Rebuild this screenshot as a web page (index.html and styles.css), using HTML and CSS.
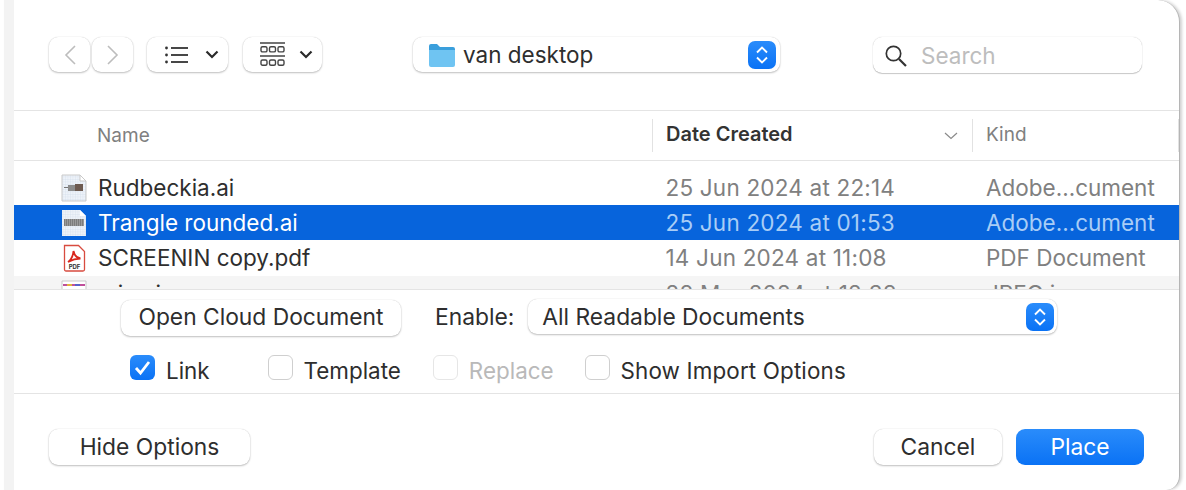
FILE: index.html
```html
<!DOCTYPE html>
<html lang="en">
<head>
    <meta charset="UTF-8">
    <title>Place</title>
    <link rel="stylesheet" href="styles.css">
</head>
<body>
    <div class="window">
        <div class="toolbar">
            <div class="btn nav-btn">
                <svg width="12" height="20" viewBox="0 0 12 20"><path d="M11 1 2 10l9 9" fill="none" stroke="#bdbdbd" stroke-width="1.6"/></svg>
            </div>
            <div class="btn nav-btn nav-next">
                <svg width="12" height="20" viewBox="0 0 12 20"><path d="M1 1l9 9-9 9" fill="none" stroke="#bdbdbd" stroke-width="1.6"/></svg>
            </div>
            <div class="btn view-btn">
                <svg width="24" height="18" viewBox="0 0 24 18"><g fill="#333"><circle cx="1.5" cy="2" r="1.4"/><circle cx="1.5" cy="9" r="1.4"/><circle cx="1.5" cy="16" r="1.4"/><rect x="6" y="1.100" width="17" height="1.800"/><rect x="6" y="8.100" width="17" height="1.800"/><rect x="6" y="15.100" width="17" height="1.800"/></g></svg>
                <svg class="chevron" width="14" height="9" viewBox="0 0 14 9"><path d="M1.500 1.500 7 7l5.500-5.500" fill="none" stroke="#2a2a2a" stroke-width="2.200"/></svg>
            </div>
            <div class="btn group-btn">
                <svg width="25" height="25" viewBox="0 0 25 25"><g fill="none" stroke="#444" stroke-width="1.400"><path d="M0 1h25M0 14h25" stroke-width="1.600"/><rect x="1" y="4.700" width="6" height="5.200" rx="1.500"/><rect x="9.500" y="4.700" width="6" height="5.200" rx="1.500"/><rect x="18" y="4.700" width="6" height="5.200" rx="1.500"/><rect x="1" y="18" width="6" height="5.200" rx="1.500"/><rect x="9.500" y="18" width="6" height="5.200" rx="1.500"/><rect x="18" y="18" width="6" height="5.200" rx="1.500"/></g></svg>
                <svg class="chevron" width="14" height="9" viewBox="0 0 14 9"><path d="M1.500 1.500 7 7l5.500-5.500" fill="none" stroke="#2a2a2a" stroke-width="2.200"/></svg>
            </div>
            <div class="btn path-select">
                <svg width="26" height="24" viewBox="0 0 26 24"><path d="M0 3a2 2 0 0 1 2-2h6l3 3h13a2 2 0 0 1 2 2v2H0z" fill="#3a9fdc"/><path d="M0 7h26v15a2 2 0 0 1-2 2H2a2 2 0 0 1-2-2z" fill="#6fc4f2"/></svg>
                <span class="path-name">van desktop</span>
                <span class="stepper">
                    <svg width="14" height="20" viewBox="0 0 14 20"><path d="M2 7.500 7 2.500l5 5M2 12.500l5 5 5-5" fill="none" stroke="#fff" stroke-width="1.900"/></svg>
                </span>
            </div>
            <div class="search">
                <svg width="24" height="24" viewBox="0 0 24 24"><circle cx="8.500" cy="10.500" r="7.200" fill="none" stroke="#333" stroke-width="1.700"/><path d="m14 16 7 7" stroke="#333" stroke-width="2.200"/></svg>
                <span class="search-text">Search</span>
            </div>
        </div>

        <div class="columns">
            <div class="col-name">Name</div>
            <div class="col-date">
                <b>Date Created</b>
                <svg width="14" height="8" viewBox="0 0 14 8"><path d="M1 1l6 5.500L13 1" fill="none" stroke="#8a8a8a" stroke-width="1.200"/></svg>
            </div>
            <div class="col-kind">Kind</div>
        </div>

        <div class="file-list">
            <div class="file-row">
                <div class="file-name">
                    <svg width="28" height="28" viewBox="0 0 28 28">
                        <defs>
                            <pattern id="artboard" width="2.500" height="2.500" patternUnits="userSpaceOnUse"><rect width="2.500" height="2.500" fill="#eef3f9"/><path d="M0 0h2.500M0 0v2.500" stroke="#cfdcea" stroke-width="0.600"/></pattern>
                            <pattern id="barcode" width="2" height="8" patternUnits="userSpaceOnUse"><rect width="2" height="8" fill="#9a9a9a"/><rect width="0.800" height="8" fill="#757575"/></pattern>
                        </defs>
                        <path d="M2 1h18l6 6v20H2z" fill="url(#artboard)" stroke="#c9c9c9"/><path d="M20 1v6h6z" fill="#fff" stroke="#c9c9c9"/><rect x="8" y="11" width="7" height="6" fill="#8c8c8c"/><rect x="15" y="10" width="8" height="7" fill="#6d5a50"/><rect x="4" y="13" width="4" height="1" fill="#777"/>
                    </svg>
                    Rudbeckia.ai
                </div>
                <div class="file-date">25 Jun 2024 at 22:14</div>
                <div class="file-kind">Adobe...cument</div>
            </div>
            <div class="file-row selected">
                <div class="file-name">
                    <svg width="28" height="28" viewBox="0 0 28 28"><path d="M2 1h18l6 6v20H2z" fill="url(#artboard)"/><path d="M20 1v6h6z" fill="#fff"/><rect x="4" y="10" width="20" height="7" fill="url(#barcode)"/></svg>
                    Trangle rounded.ai
                </div>
                <div class="file-date">25 Jun 2024 at 01:53</div>
                <div class="file-kind">Adobe...cument</div>
            </div>
            <div class="file-row">
                <div class="file-name">
                    <svg width="28" height="28" viewBox="0 0 28 28"><path d="M4.500 1.500h14l6 6v18a1.500 1.500 0 0 1-1.500 1.500H6a1.500 1.500 0 0 1-1.500-1.500z" fill="#fff" stroke="#d84b3f" stroke-width="1.300"/><path d="M8 18c3-2 5-6 5.500-11 1 5 3 7 7 7.500-4 0-8 1-12.500 3.500z" fill="none" stroke="#d8261c" stroke-width="1.800"/><text x="14.500" y="25" class="pdf-mark">PDF</text></svg>
                    SCREENIN copy.pdf
                </div>
                <div class="file-date">14 Jun 2024 at 11:08</div>
                <div class="file-kind">PDF Document</div>
            </div>
            <div class="file-row alt">
                <div class="file-name">
                    <svg width="28" height="28" viewBox="0 0 28 28"><path d="M2 1h24v26H2z" fill="#fff" stroke="#c9c9c9"/><rect x="3" y="4" width="22" height="2" fill="#c0509a"/><rect x="7" y="4" width="5" height="2" fill="#e2b33c"/><rect x="15" y="4" width="5" height="2" fill="#5a62c8"/></svg>
                    miami
                </div>
                <div class="file-date">28 Mar 2024 at 12:38</div>
                <div class="file-kind">JPEG image</div>
            </div>
        </div>

        <div class="options">
            <div class="options-top">
                <div class="btn cloud-btn">Open Cloud Document</div>
                <span class="enable-label">Enable:</span>
                <div class="btn enable-select">
                    <span>All Readable Documents</span>
                    <span class="stepper">
                        <svg width="14" height="20" viewBox="0 0 14 20"><path d="M2 7.500 7 2.500l5 5M2 12.500l5 5 5-5" fill="none" stroke="#fff" stroke-width="1.900"/></svg>
                    </span>
                </div>
            </div>
            <div class="options-checks">
                <label class="check check-link"><span class="box on"><svg width="19" height="17" viewBox="0 0 19 17"><path d="M3 9l4.500 5L16 3" fill="none" stroke="#fff" stroke-width="2.800"/></svg></span>Link</label>
                <label class="check check-template"><span class="box"></span>Template</label>
                <label class="check check-replace disabled"><span class="box"></span>Replace</label>
                <label class="check check-import"><span class="box"></span>Show Import Options</label>
            </div>
        </div>

        <div class="footer">
            <div class="btn hide-btn">Hide Options</div>
            <div class="footer-right">
                <div class="btn action-btn">Cancel</div>
                <div class="btn action-btn primary">Place</div>
            </div>
        </div>
    </div>
</body>
</html>
```
FILE: styles.css
```css
html, body {
    height: 100%;
}
body {
    margin: 0;
    padding-left: 4px;
    padding-right: 6px;
    background-color: #fff;
    font-family: Inter, "Liberation Sans", sans-serif;
    font-size: 22.5px;
    color: #2e2e2e;
    overflow: hidden;
}
.window {
    height: 490px;
    box-sizing: border-box;
    background-color: #fff;
    border-left: 10px solid #f3f3f3;
    border-right: 1px solid #b5b5b5;
    border-top-right-radius: 22px;
    border-bottom-right-radius: 14px;
    box-shadow: 2px 0 3px rgba(0, 0, 0, 0.18);
    overflow: hidden;
}
.btn {
    box-sizing: border-box;
    display: flex;
    align-items: center;
    background-color: #fff;
    border-radius: 9px;
    box-shadow: 0 1px 2px rgba(0, 0, 0, 0.24), 0 0 1px rgba(0, 0, 0, 0.2);
}

/* toolbar */
.toolbar {
    box-sizing: border-box;
    height: 110px;
    padding: 37px 0 0 35px;
    display: flex;
    align-items: flex-start;
}
.nav-btn {
    width: 41px;
    height: 35px;
    justify-content: center;
}
.nav-next {
    margin-left: 2px;
}
.view-btn {
    width: 81px;
    height: 35px;
    margin-left: 14px;
    padding-left: 18px;
}
.group-btn {
    width: 79px;
    height: 35px;
    margin-left: 15px;
    padding-left: 17px;
}
.chevron {
    margin-left: 16px;
}
.group-btn .chevron {
    margin-left: 14px;
}
.path-select {
    width: 367px;
    height: 35px;
    margin-left: 91px;
    padding: 0 4px 0 16px;
}
.path-name {
    margin-left: 8px;
    flex: 1;
}
.stepper {
    width: 28px;
    height: 28px;
    border-radius: 7px;
    background: linear-gradient(#2a8cfb, #0a72f5);
    display: flex;
    align-items: center;
    justify-content: center;
}
.search {
    box-sizing: border-box;
    width: 269px;
    height: 36px;
    margin-left: 93px;
    padding-left: 12px;
    display: flex;
    align-items: center;
    border-radius: 9px;
    box-shadow: 0 1px 1px rgba(0, 0, 0, 0.2), 0 0 1px rgba(0, 0, 0, 0.25);
}
.search-text {
    margin-left: 12px;
    color: #bdbdbd;
}

/* file table */
.columns {
    box-sizing: border-box;
    height: 51px;
    display: grid;
    grid-template-columns: 638px 321px 1fr;
    align-items: center;
    border-top: 1px solid #e4e4e4;
    border-bottom: 1px solid #e4e4e4;
    font-size: 19px;
    color: #808080;
}
.col-name {
    padding-left: 83px;
    padding-bottom: 1px;
}
.col-date {
    height: 33px;
    padding: 0 14px 0 13px;
    border-left: 1px solid #e2e2e2;
    border-right: 1px solid #e2e2e2;
    display: flex;
    align-items: center;
    justify-content: space-between;
    color: #333;
}
.col-date b {
    font-size: 20px;
    font-weight: 600;
    margin-bottom: 3px;
}
.col-kind {
    height: 33px;
    padding-left: 13px;
    line-height: 32px;
    border-right: 1px solid #e2e2e2;
}
.file-list {
    box-sizing: border-box;
    height: 129px;
    padding-top: 9px;
    overflow: hidden;
    border-bottom: 1px solid #e4e4e4;
}
.file-row {
    height: 35px;
    display: grid;
    grid-template-columns: 638px 321px 1fr;
    align-items: center;
    color: #808080;
}
.file-name {
    display: flex;
    align-items: center;
    gap: 10px;
    padding-left: 46px;
    color: #2e2e2e;
}
.file-date {
    padding-left: 13.5px;
    letter-spacing: 0.2px;
}
.file-kind {
    padding-left: 13px;
}
.file-row.selected {
    background-color: #0764dc;
    color: #a9cdf6;
}
.file-row.selected .file-name {
    color: #fff;
}
.file-row.alt {
    margin-top: 1px;
    background-color: #f5f5f5;
}
.pdf-mark {
    font-size: 6px;
    font-weight: 700;
    fill: #333;
    text-anchor: middle;
}

/* options */
.options {
    box-sizing: border-box;
    height: 104px;
    padding-top: 9px;
    border-bottom: 1px solid #e4e4e4;
    font-size: 22.8px;
}
.options-top {
    display: flex;
    align-items: flex-start;
}
.cloud-btn {
    width: 280px;
    height: 36px;
    margin-top: 1px;
    margin-left: 107px;
    padding-bottom: 3px;
    justify-content: center;
}
.enable-label {
    margin-left: 34px;
    align-self: center;
    margin-bottom: 3px;
}
.enable-select {
    width: 529px;
    height: 35px;
    margin-left: 14px;
    padding: 0 3px 0 14px;
    justify-content: space-between;
}
.options-checks {
    margin-top: 19px;
    display: flex;
    align-items: flex-start;
    font-size: 22.4px;
}
.check {
    display: flex;
    align-items: center;
    gap: 11px;
}
.box {
    box-sizing: border-box;
    width: 25px;
    height: 25px;
    margin-bottom: 6px;
    border: 1px solid #cfcfcf;
    border-radius: 6px;
    background-color: #fff;
}
.box.on {
    border: none;
    background: linear-gradient(#2a8cfb, #0a72f5);
    display: flex;
    align-items: center;
    justify-content: center;
}
.check-link {
    margin-left: 116px;
}
.check-template {
    margin-left: 58px;
}
.check-replace {
    margin-left: 32px;
    color: #b9b9b9;
}
.check-replace .box {
    border-color: #e6e6e6;
}
.check-import {
    margin-left: 31px;
    letter-spacing: 0.15px;
}

/* footer */
.footer {
    padding: 35px 35px 0 35px;
    display: flex;
    justify-content: space-between;
    font-size: 22.8px;
}
.hide-btn {
    width: 201px;
    height: 36px;
    padding-bottom: 2px;
    justify-content: center;
}
.footer-right {
    display: flex;
    gap: 14px;
}
.action-btn {
    width: 128px;
    height: 36px;
    padding-bottom: 2px;
    justify-content: center;
}
.primary {
    background: linear-gradient(#2a8cfb, #0a72f5);
    color: #fff;
    box-shadow: none;
}
```
